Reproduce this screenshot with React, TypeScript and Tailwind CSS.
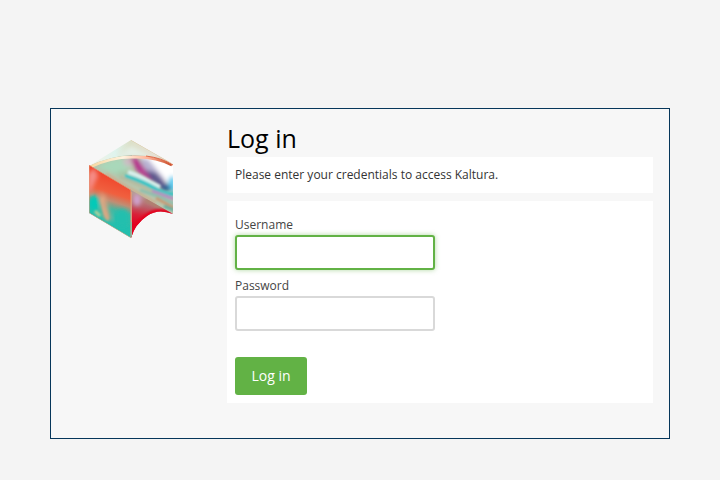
function Logo() {
  return (
    <svg viewBox="0 0 100 115" className="h-[115px] w-[100px]" role="img" aria-label="Kaltura">
      <defs>
        <clipPath id="roof">
          <path d="M51 10L93 34Q72 24 45 27Q25 29 9 36Z" />
        </clipPath>
        <clipPath id="top">
          <path d="M9 36Q30 26 53 25Q77 25 93 35V84L51 61Z" />
        </clipPath>
        <clipPath id="left">
          <path d="M9 35L51 60V108L9 83Z" />
        </clipPath>
        <clipPath id="arch">
          <path d="M51 60L93 84Q78 78 67 86Q55 94 51 108Z" />
        </clipPath>
        <linearGradient id="roofFill" x1="0" y1="0" x2="1" y2="0">
          <stop offset="0" stopColor="#fff0e0" />
          <stop offset=".35" stopColor="#dff4ee" />
          <stop offset=".5" stopColor="#dce0c8" />
          <stop offset=".75" stopColor="#e6e0d4" />
          <stop offset="1" stopColor="#d9b89a" />
        </linearGradient>
        <linearGradient id="leftFill" gradientUnits="userSpaceOnUse" x1="36" y1="46" x2="22" y2="90">
          <stop offset="0" stopColor="#f0432a" />
          <stop offset=".38" stopColor="#f0603f" />
          <stop offset=".55" stopColor="#c08e74" />
          <stop offset=".72" stopColor="#3fb8a2" />
          <stop offset="1" stopColor="#22bfae" />
        </linearGradient>
        <linearGradient id="archFill" gradientUnits="userSpaceOnUse" x1="66" y1="66" x2="61" y2="96">
          <stop offset="0" stopColor="#b59a90" />
          <stop offset=".35" stopColor="#b8626a" />
          <stop offset=".65" stopColor="#d92038" />
          <stop offset="1" stopColor="#e00022" />
        </linearGradient>
        <linearGradient id="rim" x1="0" y1="0" x2="1" y2="0">
          <stop offset="0" stopColor="#f6d7a0" />
          <stop offset=".4" stopColor="#fff3df" />
          <stop offset=".7" stopColor="#ffb398" />
          <stop offset="1" stopColor="#c84b28" />
        </linearGradient>
        <filter id="soft1" x="-50%" y="-50%" width="200%" height="200%">
          <feGaussianBlur stdDeviation="1" />
        </filter>
        <filter id="soft2" x="-50%" y="-50%" width="200%" height="200%">
          <feGaussianBlur stdDeviation="2" />
        </filter>
      </defs>

      <g clipPath="url(#roof)">
        <rect width="100" height="60" fill="url(#roofFill)" />
        <path d="M51 16L72 27H38Z" fill="#e4efe6" filter="url(#soft2)" />
        <path d="M51 10L93 34" stroke="#dccba8" strokeWidth="1" />
      </g>

      <g clipPath="url(#top)">
        <rect y="20" width="100" height="70" fill="#b9c5ac" />
        <g filter="url(#soft2)">
          <path d="M16 37Q32 27 50 28L50 38L38 45Z" fill="#a9d8ba" />
          <ellipse cx="48" cy="32" rx="5" ry="4" fill="#cdbcc4" />
          <ellipse cx="44" cy="44" rx="8" ry="3" fill="#a4c8a8" />
          <path d="M60 24L100 30V60L86 52L74 46Z" fill="#fff" />
          <path d="M60 28L68 29L84 48L88 57L78 56L66 44Z" fill="#b8b2d2" />
          <path d="M50 28L57 28L67 42L80 52L70 51L57 41Z" fill="#b5308c" />
          <path d="M66 40L76 43L89 57L82 59L71 50Z" fill="#5b568c" />
          <ellipse cx="92" cy="54" rx="4" ry="8" fill="#5ccdf0" />
          <ellipse cx="86" cy="58" rx="5" ry="3" fill="#1d5a92" />
        </g>
        <g fill="none" filter="url(#soft1)">
          <path d="M48 42Q58 45 70 52L80 57" stroke="#d8efec" strokeWidth="4" />
          <path d="M45 46Q62 51 74 58T94 64" stroke="#3cc4c4" strokeWidth="4" />
          <path d="M40 47Q58 54 74 62L94 69" stroke="#b5bba0" strokeWidth="3" />
          <path d="M72 61L94 69" stroke="#b890c0" strokeWidth="3" />
          <path d="M60 60L80 67L94 74" stroke="#8fbfae" strokeWidth="3" />
          <path d="M76 68L94 78" stroke="#c79a74" strokeWidth="3" />
          <path d="M84 76L94 80" stroke="#67b0a0" strokeWidth="3" />
          <path d="M26 44L51 59L76 73" stroke="#c9b294" strokeWidth="3" />
        </g>
      </g>
      <path d="M10 37Q30 27 52 27Q76 26 92 35" fill="none" stroke="url(#rim)" strokeWidth="3" clipPath="url(#top)" />
      <path d="M66 26Q82 28 93 35" fill="none" stroke="#dd6a48" strokeWidth="1" />

      <g clipPath="url(#left)">
        <rect width="100" height="115" fill="url(#leftFill)" />
        <g filter="url(#soft2)">
          <path d="M8 44L14 38L18 46L10 62H8Z" fill="#f58c86" />
          <ellipse cx="14" cy="73" rx="5" ry="8" fill="#00cbb9" />
          <path d="M20 62L25 66L31 91L24 88Z" fill="#e6a27e" />
          <ellipse cx="42" cy="88" rx="8" ry="9" fill="#20bfae" />
        </g>
        <path d="M22 68Q22 78 28 90" fill="none" stroke="#e0aa84" strokeWidth="2" filter="url(#soft1)" />
        <path d="M15 81L20 86" stroke="#b5d29b" strokeWidth="3" filter="url(#soft1)" />
        <path d="M9 83V35L51 60V108Z" fill="none" stroke="#df9c78" strokeWidth="1" />
      </g>

      <g clipPath="url(#arch)">
        <rect x="50" y="55" width="50" height="60" fill="url(#archFill)" />
        <ellipse cx="57" cy="70" rx="4" ry="6" fill="#d0a3d0" filter="url(#soft2)" />
        <path d="M66 70L90 83" stroke="#b08070" strokeWidth="4" filter="url(#soft1)" />
        <path d="M51 108Q55 94 67 86Q78 78 93 84" fill="none" stroke="#e5001f" strokeWidth="5" filter="url(#soft1)" />
        <path d="M51 62V96" stroke="#d89a80" strokeWidth="2" />
        <path d="M51 92V108" stroke="#8fb8a0" strokeWidth="2" />
      </g>
    </svg>
  );
}

const field =
  "block h-[35px] w-[200px] max-w-full rounded-[3px] border-2 border-[#d9d9d9] bg-white px-2 text-sm outline-none focus:border-[#62b245] focus:shadow-[0_0_5px_rgba(98,178,69,0.5)]";

export default function App() {
  return (
    <div className="min-h-screen bg-[#f4f4f4] px-[50px] pt-[108px] font-['Open_Sans','Noto_Sans',sans-serif] text-xs text-[#333]">
      <main className="flex border border-[#06365a] bg-[#f7f7f7] pt-4 pr-4 pb-[35px]">
        <div className="w-44 shrink-0 pt-[5px] pl-[29px]">
          <Logo />
        </div>
        <div className="min-w-0 flex-1">
          <h1 className="mb-1.5 text-[25px] leading-[26px] text-black">Log in</h1>
          <p className="mb-2 bg-white p-2 leading-5">Please enter your credentials to access Kaltura.</p>
          <form className="bg-white px-2 pt-4 pb-2" onSubmit={(event) => event.preventDefault()}>
            <label htmlFor="username" className="block h-[18px] leading-4 text-[#444]">
              Username
            </label>
            <input id="username" name="username" type="text" autoFocus className={field} />
            <label htmlFor="password" className="mt-2 block h-[18px] leading-4 text-[#444]">
              Password
            </label>
            <input id="password" name="password" type="password" className={field} />
            <button type="submit" className="mt-[26px] block h-[38px] w-[72px] rounded-[3px] bg-[#62b245] text-sm text-white">
              Log in
            </button>
          </form>
        </div>
      </main>
    </div>
  );
}
